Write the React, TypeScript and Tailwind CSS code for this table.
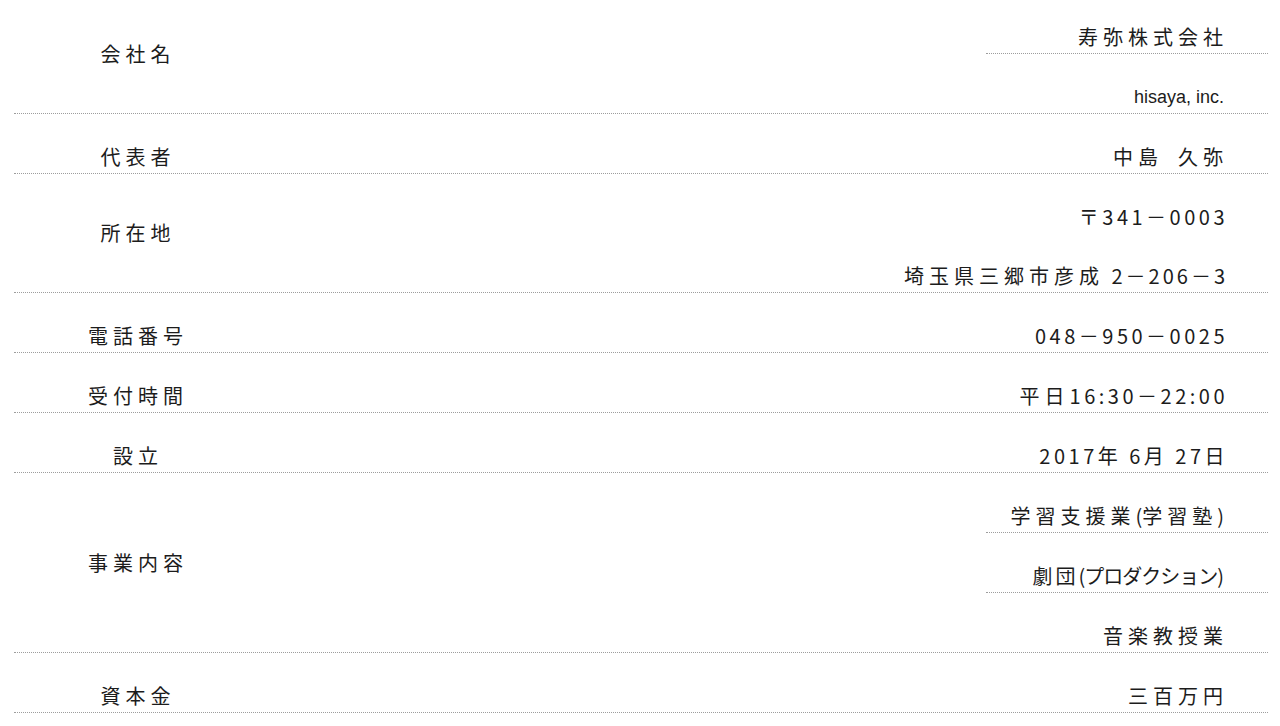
import React from 'react';

interface Part {
  t: string;
  c: string;
}

interface Line {
  parts: Part[];
  border?: boolean;
}

interface Row {
  label: string;
  lines: Line[];
}

// letter spacing differs between kanji, kana and digits in the reference
const jp = 'tracking-[5px]';
const num = 'tracking-[3.5px]';
const addr = 'tracking-[3px]';
const tight = 'tracking-[0px]';
const tightEnd = 'tracking-[0px] mr-[4px]';
const kanaEnd = 'tracking-[-1px] mr-[5px]';
const latin = "tracking-normal mr-[4px] text-[18px] font-['Liberation_Sans',sans-serif]";

const rows: Row[] = [
  {
    label: '会社名',
    lines: [
      { parts: [{ t: '寿弥株式会社', c: jp }], border: true },
      { parts: [{ t: 'hisaya, inc.', c: latin }] },
    ],
  },
  { label: '代表者', lines: [{ parts: [{ t: '中島\u2002久弥', c: jp }] }] },
  {
    label: '所在地',
    lines: [
      { parts: [{ t: '〒341－0003', c: num }] },
      { parts: [{ t: '埼玉県三郷市彦成', c: jp }, { t: ' 2－206－3', c: addr }] },
    ],
  },
  { label: '電話番号', lines: [{ parts: [{ t: '048－950－0025', c: num }] }] },
  {
    label: '受付時間',
    lines: [{ parts: [{ t: '平日', c: jp }, { t: '16:30－22:00', c: num }] }],
  },
  { label: '設立', lines: [{ parts: [{ t: '2017年 6月 27日', c: num }] }] },
  {
    label: '事業内容',
    lines: [
      {
        parts: [
          { t: '学習支援業', c: jp },
          { t: '(', c: tight },
          { t: '学習塾', c: jp },
          { t: ')', c: tightEnd },
        ],
        border: true,
      },
      {
        parts: [
          { t: '劇団', c: 'tracking-[3px]' },
          { t: '(プロダクション)', c: kanaEnd },
        ],
        border: true,
      },
      { parts: [{ t: '音楽教授業', c: jp }] },
    ],
  },
  { label: '資本金', lines: [{ parts: [{ t: '三百万円', c: jp }] }] },
];

const App: React.FC = () => {
  return (
    <div className="min-h-screen bg-white text-[#1c1c1c] font-['Noto_Sans_CJK_JP',sans-serif] overflow-hidden">
      <div className="-mt-[6px] ml-[14px] mr-[12px]">
        {rows.map(row => (
          <div key={row.label} className="flex border-b border-dotted border-[#9d9d9d]">
            <div
              className={
                row.lines.length > 1
                  ? 'w-[243px] flex items-center justify-center text-[20px] leading-[28px] tracking-[5px] pl-[5px]'
                  : 'w-[243px] flex items-end justify-center pb-[2px] text-[20px] leading-[28px] tracking-[5px] pl-[5px]'
              }
            >
              {row.label}
            </div>
            <div className="flex-1 flex flex-col items-end">
              {row.lines.map((line, i) => (
                <div
                  key={i}
                  className={
                    line.border
                      ? 'min-w-[282px] h-[60px] flex items-end justify-end pb-[2px] border-b border-dotted border-[#9d9d9d]'
                      : 'min-w-[282px] h-[59px] flex items-end justify-end pb-[2px]'
                  }
                >
                  <span className="pr-[40px] text-[20px] leading-[28px] whitespace-nowrap">
                    {line.parts.map((p, j) => (
                      <span key={j} className={p.c}>
                        {p.t}
                      </span>
                    ))}
                  </span>
                </div>
              ))}
            </div>
          </div>
        ))}
      </div>
    </div>
  );
};

export default App;
